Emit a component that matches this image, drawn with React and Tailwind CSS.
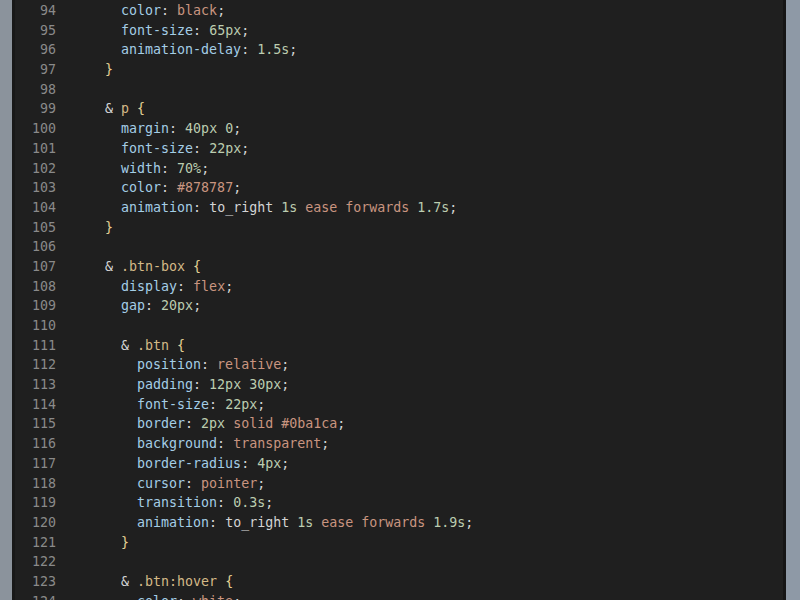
import React from "react";

const P = "text-[#a4cde6]";
const N = "text-[#bccdb0]";
const K = "text-[#c99580]";
const W = "text-[#d4d4d4]";
const S = "text-[#d4b987]";
const B = "text-[#e4d294]";

const t = (c, s) => ({ c, s });

const decl = (ind, prop, vals) => [
  t(W, " ".repeat(ind)),
  t(P, prop),
  t(W, ": "),
  ...vals,
  t(W, ";"),
];

const lines = [
  [94, decl(6, "color", [t(K, "black")])],
  [95, decl(6, "font-size", [t(N, "65px")])],
  [96, decl(6, "animation-delay", [t(N, "1.5s")])],
  [97, [t(W, "    "), t(B, "}")]],
  [98, []],
  [99, [t(W, "    & "), t(S, "p"), t(W, " "), t(B, "{")]],
  [100, decl(6, "margin", [t(N, "40px 0")])],
  [101, decl(6, "font-size", [t(N, "22px")])],
  [102, decl(6, "width", [t(N, "70%")])],
  [103, decl(6, "color", [t(K, "#878787")])],
  [104, decl(6, "animation", [t(W, "to_right "), t(N, "1s "), t(K, "ease forwards "), t(N, "1.7s")])],
  [105, [t(W, "    "), t(B, "}")]],
  [106, []],
  [107, [t(W, "    & "), t(S, ".btn-box"), t(W, " "), t(B, "{")]],
  [108, decl(6, "display", [t(K, "flex")])],
  [109, decl(6, "gap", [t(N, "20px")])],
  [110, []],
  [111, [t(W, "      & "), t(S, ".btn"), t(W, " "), t(B, "{")]],
  [112, decl(8, "position", [t(K, "relative")])],
  [113, decl(8, "padding", [t(N, "12px 30px")])],
  [114, decl(8, "font-size", [t(N, "22px")])],
  [115, decl(8, "border", [t(N, "2px "), t(K, "solid #0ba1ca")])],
  [116, decl(8, "background", [t(K, "transparent")])],
  [117, decl(8, "border-radius", [t(N, "4px")])],
  [118, decl(8, "cursor", [t(K, "pointer")])],
  [119, decl(8, "transition", [t(N, "0.3s")])],
  [120, decl(8, "animation", [t(W, "to_right "), t(N, "1s "), t(K, "ease forwards "), t(N, "1.9s")])],
  [121, [t(W, "      "), t(B, "}")]],
  [122, []],
  [123, [t(W, "      & "), t(S, ".btn:hover"), t(W, " "), t(B, "{")]],
  [124, decl(8, "color", [t(K, "white")])],
];

export default function App() {
  return (
    <div className="w-[800px] h-[600px] overflow-hidden flex bg-[#8b939c]">
      <div className="w-[12px] bg-[#8b939c]" />
      <div className="w-[3px] bg-[#181818]" />
      <div
        className="flex-1 bg-[#1f1f1f] pt-[1px] text-[13.3px] leading-[19.7px] whitespace-pre"
        style={{ fontFamily: '"DejaVu Sans Mono", "Liberation Mono", monospace' }}
      >
        {lines.map(([n, toks]) => (
          <div key={n} className="flex h-[19.7px]">
            <div className="w-[41px] text-right text-[#8a8a8a]">{n}</div>
            <div className="w-[17px]" />
            <div>
              {toks.map((tk, i) => (
                <span key={i} className={tk.c}>
                  {tk.s}
                </span>
              ))}
            </div>
          </div>
        ))}
      </div>
      <div className="w-[3px] bg-[#151515]" />
      <div className="w-[14px] bg-[#8e99a6]" />
    </div>
  );
}
